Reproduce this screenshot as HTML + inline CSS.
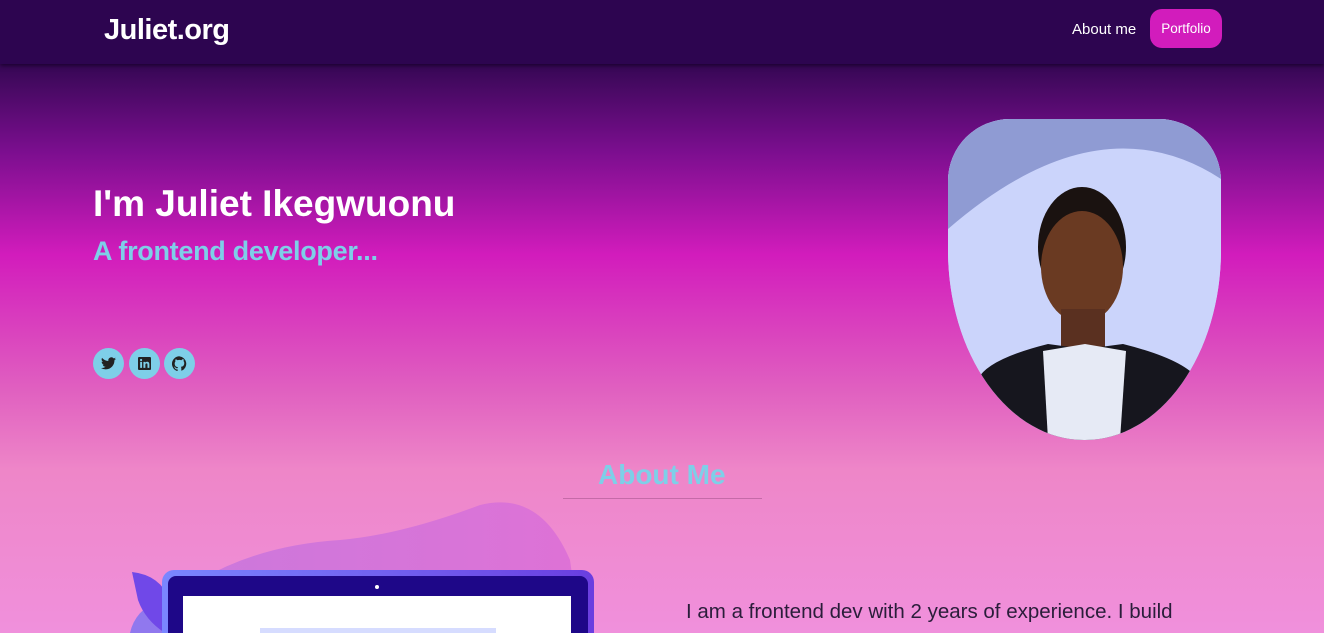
<!DOCTYPE html>
<html style="height:633px;overflow:hidden"><head><meta charset="utf-8"><style>
*{margin:0;padding:0;box-sizing:border-box}
html{background:#f090dc}
body{width:1324px;height:633px;overflow:hidden;font-family:"Liberation Sans",sans-serif;position:relative;
background:linear-gradient(180deg,#2e0550 0px,#3a0858 70px,#7a0e8e 150px,#d21cbc 255px,#e060c0 390px,#ee86c8 470px,#f090dc 633px);}
.nav{position:absolute;left:0;top:0;width:1324px;height:64px;background:#2d0550;box-shadow:0 2px 4px rgba(20,0,40,.8)}
.logo{position:absolute;left:104px;top:14px;color:#fff;font-size:29px;font-weight:bold;letter-spacing:-0.5px}
.about{position:absolute;left:1072px;top:21px;color:#fff;font-size:15px}
.pf{position:absolute;left:1150px;top:9px;width:72px;height:39px;border-radius:12px;background:#d21cbc;color:#fff;font-size:13.5px;line-height:39px;text-align:center}
h1{position:absolute;left:93px;top:183px;color:#fff;font-size:37px;font-weight:bold;letter-spacing:0px}
h2{position:absolute;left:93px;top:236px;color:#7ecfe8;font-size:27px;font-weight:bold;letter-spacing:-0.3px}
.ic{position:absolute;top:348px;width:31px;height:31px;border-radius:50%;background:#7ecfe8;display:flex;align-items:center;justify-content:center}
.photo{position:absolute;left:948px;top:119px;width:273px;height:321px;overflow:hidden;
border-radius:62px 62px 136px 136px/62px 62px 190px 190px;background:#c9d3fb}
.am{position:absolute;left:598px;top:459px;color:#7ecfe8;font-size:28px;font-weight:bold}
.line{position:absolute;left:563px;top:498px;width:199px;height:1px;background:#c56aa8}
.p{position:absolute;left:686px;top:594px;color:#2a1d3a;font-size:20.5px;line-height:36px;width:560px;height:39px;overflow:hidden}
.bot{position:absolute;left:0;top:495px;width:640px;height:138px;overflow:hidden}
</style></head><body>
<div class="nav"><div class="logo">Juliet.org</div><div class="about">About me</div><div class="pf">Portfolio</div></div>
<h1>I'm Juliet Ikegwuonu</h1>
<h2>A frontend developer...</h2>
<div class="ic" style="left:93px"><svg width="15" height="13" viewBox="0 0 24 20"><path fill="#222" d="M24 2.4a10 10 0 0 1-2.8.8A4.9 4.9 0 0 0 23.3.5a9.8 9.8 0 0 1-3.1 1.2A4.9 4.9 0 0 0 11.8 6 14 14 0 0 1 1.7.9a4.9 4.9 0 0 0 1.5 6.6 4.9 4.9 0 0 1-2.2-.6 4.9 4.9 0 0 0 3.900 4.8 4.9 4.9 0 0 1-2.2.1 4.9 4.9 0 0 0 4.6 3.4A9.9 9.9 0 0 1 0 17.2 14 14 0 0 0 7.5 19.4c9 0 14-7.5 14-14v-.6A10 10 0 0 0 24 2.4z"/></svg></div>
<div class="ic" style="left:129px"><svg width="13" height="13" viewBox="0 0 24 24"><rect width="24" height="24" rx="2" fill="#222"/><path fill="#7ecfe8" d="M4 9h3.5v11H4zM5.7 3.5a2 2 0 1 1 0 4 2 2 0 0 1 0-4zM10 9h3.3v1.5c.5-.9 1.6-1.8 3.4-1.8 3.6 0 4.3 2.4 4.300 5.4V20h-3.5v-5.3c0-1.3 0-2.9-1.8-2.9s-2.1 1.4-2.1 2.8V20H10z"/></svg></div>
<div class="ic" style="left:164px"><svg width="15" height="15" viewBox="0 0 24 24"><path fill="#222" d="M12 .5a12 12 0 0 0-3.8 23.4c.6.1.8-.3.8-.6v-2c-3.3.7-4-1.6-4-1.6-.6-1.4-1.400-1.8-1.4-1.8-1.100-.7.1-.7.1-.7 1.2.1 1.8 1.2 1.8 1.2 1.1 1.8 2.8 1.3 3.5 1 .1-.8.4-1.3.8-1.6-2.7-.3-5.5-1.3-5.5-5.9 0-1.3.5-2.4 1.2-3.2-.1-.3-.5-1.5.1-3.2 0 0 1-.3 3.300 1.2a11.5 11.5 0 0 1 6 0C17.3 4.6 18.3 5 18.3 5c.7 1.7.2 2.9.1 3.2.8.8 1.2 1.9 1.2 3.2 0 4.6-2.8 5.6-5.5 5.9.4.4.8 1.1.8 2.2v3.3c0 .3.2.7.8.6A12 12 0 0 0 12 .5z"/></svg></div>
<div class="photo"><svg width="273" height="321" viewBox="0 0 273 321">
<rect width="273" height="321" fill="#cbd4fb"/>
<path d="M0 0H273V60Q150 -20 0 110Z" fill="#8f9bd3"/>
<ellipse cx="134" cy="128" rx="44" ry="60" fill="#1a1210"/>
<ellipse cx="134" cy="148" rx="41" ry="56" fill="#6a3a22"/>
<rect x="113" y="190" width="44" height="50" fill="#5a3020"/>
<path d="M30 260Q40 240 100 225L137 230L175 225Q235 240 250 260L273 321H0Z" fill="#16161e"/>
<path d="M95 232L137 225L178 232L172 321H100Z" fill="#e6eaf5"/>
</svg></div>
<div class="am">About Me</div>
<div class="line"></div>
<div class="bot"><svg width="640" height="138" viewBox="0 495 640 138">
<defs><linearGradient id="b" x1="0" x2="1"><stop offset="0" stop-color="#cc78dc"/><stop offset="1" stop-color="#de72d6"/></linearGradient>
<linearGradient id="f" x1="0" x2="1"><stop offset="0" stop-color="#7a86ff"/><stop offset="1" stop-color="#6a3ee0"/></linearGradient></defs>
<path d="M200 580Q260 545 340 540Q400 535 480 505Q540 490 570 560L580 633H200Z" fill="url(#b)"/>
<path d="M130 633Q135 610 160 600L175 633Z" fill="#9078ee"/>
<path d="M132 572Q160 575 170 600L165 633Q145 620 138 600Z" fill="#7048e8"/>
<rect x="162" y="570" width="432" height="80" rx="12" fill="url(#f)"/>
<rect x="168" y="576" width="420" height="70" rx="8" fill="#1e0788"/>
<circle cx="377" cy="587" r="2" fill="#fff"/>
<rect x="183" y="596" width="388" height="50" fill="#fff"/>
<rect x="260" y="628" width="236" height="10" fill="#d6dcff"/>
</svg></div>
<div class="p">I am a frontend dev with 2 years of experience. I build websites that are responsive and accessible</div>
</body></html>
